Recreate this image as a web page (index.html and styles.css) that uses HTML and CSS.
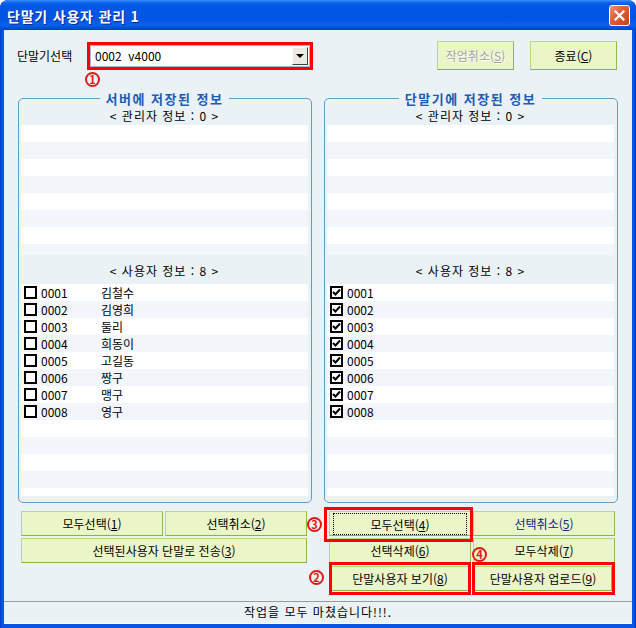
FILE: index.html
```html
<!DOCTYPE html>
<html lang="ko">
<head>
    <meta charset="UTF-8">
    <title>단말기 사용자 관리 1</title>
    <link rel="stylesheet" href="styles.css">
</head>
<body>

<div class="window">
    <div class="titlebar">
        <span class="title">단말기 사용자 관리 1</span>
        <span class="close">
            <svg width="11" height="11" viewBox="0 0 11 11"><path d="M1.5 1.5 L9.5 9.5 M9.5 1.5 L1.5 9.5" stroke="#fff" stroke-width="2.2" stroke-linecap="square"/></svg>
        </span>
    </div>

    <div class="client">
        <div class="toolbar">
            <span class="label">단말기선택</span>
            <div class="combo mark">
                <span class="combo-text">0002&nbsp;&nbsp;v4000</span>
                <span class="combo-btn"><i></i></span>
            </div>
            <div class="spacer"></div>
            <button class="btn btn-top" disabled>작업취소(<u>S</u>)</button>
            <button class="btn btn-top btn-close">종료(<u>C</u>)</button>
        </div>

        <div class="groups">
            <div class="group">
                <div class="group-title">서버에 저장된 정보</div>
                <div class="caption">&lt; 관리자 정보 : 0 &gt;</div>
                <div class="list admin-list"></div>
                <div class="caption caption-users">&lt; 사용자 정보 : 8 &gt;</div>
                <div class="list user-list">
                    <div class="row"><span class="chk"></span><span class="code">0001</span><span>김철수</span></div>
                    <div class="row"><span class="chk"></span><span class="code">0002</span><span>김영희</span></div>
                    <div class="row"><span class="chk"></span><span class="code">0003</span><span>둘리</span></div>
                    <div class="row"><span class="chk"></span><span class="code">0004</span><span>희동이</span></div>
                    <div class="row"><span class="chk"></span><span class="code">0005</span><span>고길동</span></div>
                    <div class="row"><span class="chk"></span><span class="code">0006</span><span>짱구</span></div>
                    <div class="row"><span class="chk"></span><span class="code">0007</span><span>맹구</span></div>
                    <div class="row"><span class="chk"></span><span class="code">0008</span><span>영구</span></div>
                </div>
            </div>

            <div class="group">
                <div class="group-title">단말기에 저장된 정보</div>
                <div class="caption">&lt; 관리자 정보 : 0 &gt;</div>
                <div class="list admin-list"></div>
                <div class="caption caption-users">&lt; 사용자 정보 : 8 &gt;</div>
                <div class="list user-list">
                    <div class="row"><span class="chk on"></span><span class="code">0001</span></div>
                    <div class="row"><span class="chk on"></span><span class="code">0002</span></div>
                    <div class="row"><span class="chk on"></span><span class="code">0003</span></div>
                    <div class="row"><span class="chk on"></span><span class="code">0004</span></div>
                    <div class="row"><span class="chk on"></span><span class="code">0005</span></div>
                    <div class="row"><span class="chk on"></span><span class="code">0006</span></div>
                    <div class="row"><span class="chk on"></span><span class="code">0007</span></div>
                    <div class="row"><span class="chk on"></span><span class="code">0008</span></div>
                </div>
            </div>
        </div>

        <div class="actions">
            <div class="col col-left">
                <div class="btn-row">
                    <button class="btn">모두선택(<u>1</u>)</button>
                    <button class="btn">선택취소(<u>2</u>)</button>
                </div>
                <div class="btn-row">
                    <button class="btn btn-wide">선택된사용자 단말로 전송(<u>3</u>)</button>
                </div>
            </div>
            <div class="col col-right">
                <div class="btn-row">
                    <button class="btn focus hl hl-4"><span>모두선택(<u>4</u>)</span></button>
                    <button class="btn blue">선택취소(<u>5</u>)</button>
                </div>
                <div class="btn-row">
                    <button class="btn">선택삭제(<u>6</u>)</button>
                    <button class="btn">모두삭제(<u>7</u>)</button>
                </div>
                <div class="btn-row last">
                    <button class="btn hl hl-8">단말사용자 보기(<u>8</u>)</button>
                    <button class="btn hl hl-9">단말사용자 업로드(<u>9</u>)</button>
                </div>
            </div>
        </div>

        <div class="status">작업을 모두 마쳤습니다!!!.</div>

        <!-- 설명용 번호 -->
        <span class="num num-1">1</span>
        <span class="num num-2">2</span>
        <span class="num num-3">3</span>
        <span class="num num-4">4</span>
    </div>
</div>

</body>
</html>
```

FILE: styles.css
```css
* {
    box-sizing: border-box;
}
body {
    margin: 0;
    background: #fff;
    font-family: "Noto Sans CJK KR", "Noto Sans", sans-serif;
    font-size: 12px;
    color: #000;
}
.window {
    width: 636px;
    height: 628px;
    display: flex;
    flex-direction: column;
    background: linear-gradient(90deg, #0838c4 0, #0a55e4 2px, #0a55e4 634px, #0030b0 636px);
    border-radius: 8px 8px 0 0;
    overflow: hidden;
}
.titlebar {
    height: 30px;
    flex: none;
    display: flex;
    align-items: center;
    padding: 0 6px 0 7px;
    background: linear-gradient(180deg, #3d8ff8 0, #0b62ec 3px, #0058e6 6px, #0054e3 18px, #0a5fee 25px, #0050d8 28px, #0040c8 30px);
}
.title {
    flex: 1;
    color: #fff;
    font-weight: bold;
    font-size: 14px;
    letter-spacing: 0.8px;
    text-shadow: 1px 1px #0a2a90;
    padding-top: 1px;
}
.close {
    width: 21px;
    height: 21px;
    border: 1px solid #fff;
    border-radius: 3px;
    background: linear-gradient(135deg, #f09070 0, #e0603c 40%, #c8401c 100%);
    display: flex;
    align-items: center;
    justify-content: center;
}
.client {
    position: relative;
    flex: 1;
    margin: 0 4px 4px;
    background: #ebf2f6;
    display: flex;
    flex-direction: column;
}

/* obere Zeile */
.toolbar {
    display: flex;
    align-items: center;
    height: 29px;
    margin-top: 11px;
    padding: 0 15px 0 13px;
}
.label {
    width: 70px;
}
.combo {
    margin-left: 3px;
    width: 220px;
    height: 22px;
    background: #fff;
    border: 1px solid #a5b9c8;
    display: flex;
    align-items: center;
}
.mark {
    outline: 3px solid #f00;
}
.combo-text {
    flex: 1;
    padding-left: 4px;
}
.combo-btn {
    width: 16px;
    height: 18px;
    margin-right: 1px;
    background: #ece9e0;
    border: 1px solid;
    border-color: #fff #404040 #404040 #fff;
    display: flex;
    align-items: center;
    justify-content: center;
}
.combo-btn i {
    border-left: 4px solid transparent;
    border-right: 4px solid transparent;
    border-top: 4px solid #000;
}
.spacer {
    flex: 1;
}

/* Buttons */
.btn {
    height: 25px;
    padding: 0;
    background: #ebf6c8;
    border: 1px solid;
    border-color: #b9d97e #8fbb43 #86b53a #b9d97e;
    font-family: inherit;
    font-size: 12px;
    color: #000;
}
.btn:disabled {
    color: #a3a3a3;
    text-shadow: 1px 1px #fff;
}
.btn-top {
    width: 77px;
    height: 29px;
}
.btn-close {
    width: 87px;
    margin-left: 16px;
}
.blue {
    color: #0a248c;
}
.focus span {
    display: block;
    margin: 0 3px;
    padding: 2px 0 1px;
    border: 1px dotted #000;
}

/* Gruppen */
.groups {
    display: flex;
    gap: 12px;
    margin-top: 28px;
    padding: 0 14px;
}
.group {
    width: 294px;
    height: 405px;
    border: 1px solid #5f9dc4;
    border-radius: 5px;
    display: flex;
    flex-direction: column;
    padding: 0 3px 6px 2px;
}
.group-title {
    align-self: center;
    margin: -9px 0 -8px;
    padding: 0 6px;
    line-height: 17px;
    background: #ebf2f6;
    color: #1a5cb8;
    font-weight: bold;
    font-size: 13px;
    letter-spacing: 1.5px;
}
.caption {
    height: 26px;
    padding-top: 8px;
    line-height: 17px;
    text-align: center;
    letter-spacing: 1px;
}
.caption-users {
    height: 29px;
    padding-top: 7px;
}
.list {
    background: repeating-linear-gradient(180deg, #fff 0, #fff 17px, #f2f6fb 17px, #f2f6fb 34px);
}
.admin-list {
    height: 130px;
}
.user-list {
    height: 212px;
}
.row {
    height: 17px;
    display: flex;
    align-items: center;
    padding-left: 3px;
}
.chk {
    width: 13px;
    height: 13px;
    border: 2px solid #000;
    background: #fff;
    margin-right: 4px;
}
.chk.on {
    background: #fff url("data:image/svg+xml;utf8,<svg xmlns='http://www.w3.org/2000/svg' width='9' height='9'><path d='M1 4 L3.5 6.5 L8 1.5' stroke='black' stroke-width='2' fill='none'/></svg>") center no-repeat;
}
.code {
    width: 60px;
}

/* untere Buttons */
.actions {
    display: flex;
    gap: 12px;
    margin-top: 8px;
    padding: 0 14px;
}
.col {
    width: 294px;
}
.col-left {
    padding-left: 3px;
}
.col-right {
    padding-left: 5px;
}
.btn-row {
    display: flex;
    gap: 2px;
    margin-bottom: 2px;
}
.btn-row .btn {
    width: 142px;
}
.btn-row .btn-wide {
    width: 286px;
}
.btn-row + .btn-row.last {
    margin-top: 3px;
    gap: 5px;
}
.btn-row.last .btn {
    width: 138px;
}
.btn-row.last .hl-8 {
    margin-left: 2px;
}

/* rote Markierungen */
.hl {
    position: relative;
}
.hl::after {
    content: "";
    position: absolute;
    border: 3px solid #f00;
}
.hl-4::after {
    inset: -5px -3px -7px -6px;
}
.hl-8::after {
    inset: -5px -3px -5px -3px;
}
.hl-9::after {
    inset: -5px -4px -5px -3px;
}
.num {
    position: absolute;
    width: 15px;
    height: 15px;
    border: 2px solid #e21818;
    border-radius: 50%;
    color: #e21818;
    font-weight: bold;
    font-size: 11px;
    line-height: 11px;
    text-align: center;
}
.num-1 { left: 81px; top: 42px; }
.num-2 { left: 305px; top: 540px; }
.num-3 { left: 303px; top: 487px; }
.num-4 { left: 468px; top: 517px; }

/* Statuszeile */
.status {
    margin-top: auto;
    height: 23px;
    border-top: 1px solid #9a9a9a;
    border-bottom: 1px solid #fff;
    text-align: center;
    line-height: 20px;
    letter-spacing: 1px;
}
```
